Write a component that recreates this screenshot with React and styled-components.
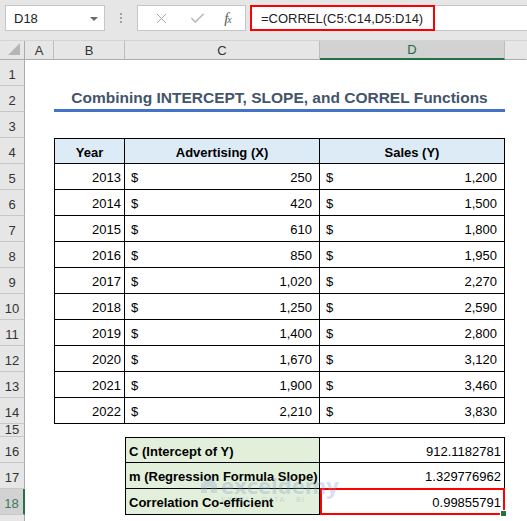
import styled, { createGlobalStyle } from "styled-components";
import { X, Check } from "lucide-react";

const COLS = "25px 29px 71px 195px 185px 1fr";

const years = [2013, 2014, 2015, 2016, 2017, 2018, 2019, 2020, 2021, 2022];
const advertising = [250, 420, 610, 850, 1020, 1250, 1400, 1670, 1900, 2210];
const sales = [1200, 1500, 1800, 1950, 2270, 2590, 2800, 3120, 3460, 3830];

const stats = [
  { label: "C (Intercept of Y)", value: "912.1182781" },
  { label: "m (Regression Formula Slope)", value: "1.329776962" },
  { label: "Correlation Co-efficient", value: "0.99855791" },
];

const fmt = (n) => n.toLocaleString("en-US");

const App = () => {
  return (
    <Window>
      <GlobalStyle />

      <FormulaBar>
        <NameBox>
          D18
          <Caret />
        </NameBox>
        <Grip>
          <span />
          <span />
          <span />
        </Grip>
        <IconBox>
          <X size={17} strokeWidth={1.4} color="#a6a6a6" />
          <Check size={17} strokeWidth={2.4} color="#bdbdbd" />
          <Fx>
            f<sub>x</sub>
          </Fx>
        </IconBox>
        <FormulaInput>
          <FormulaText>=CORREL(C5:C14,D5:D14)</FormulaText>
        </FormulaInput>
      </FormulaBar>

      <Row $h={19}>
        <Corner>
          <svg width="14" height="14" viewBox="0 0 14 14">
            <polygon points="13,1 13,13 1,13" fill="#b5b5b5" />
          </svg>
        </Corner>
        <ColHead>A</ColHead>
        <ColHead>B</ColHead>
        <ColHead>C</ColHead>
        <ColHead $selected>D</ColHead>
        <ColHead $last />
      </Row>

      <Row $h={26}>
        <RowHead>1</RowHead>
      </Row>

      <Row $h={26}>
        <RowHead>2</RowHead>
        <Cell />
        <Title>Combining INTERCEPT, SLOPE, and CORREL Functions</Title>
      </Row>

      <Row $h={26}>
        <RowHead>3</RowHead>
      </Row>

      <Row $h={26}>
        <RowHead>4</RowHead>
        <Cell />
        <Cell $box $top $left $bold $bg="#ddebf7" $align="center">
          Year
        </Cell>
        <Cell $box $top $bold $bg="#ddebf7" $align="center">
          Advertising (X)
        </Cell>
        <Cell $box $top $bold $bg="#ddebf7" $align="center">
          Sales (Y)
        </Cell>
      </Row>

      {years.map((y, i) => (
        <Row $h={26} key={y}>
          <RowHead>{i + 5}</RowHead>
          <Cell />
          <Cell $box $left $align="right">
            {y}
          </Cell>
          <Cell $box $pl={6} $pr={7}>
            <span>$</span>
            <span>{fmt(advertising[i])}</span>
          </Cell>
          <Cell $box $pl={6} $pr={7}>
            <span>$</span>
            <span>{fmt(sales[i])}</span>
          </Cell>
        </Row>
      ))}

      <Row $h={13}>
        <RowHead $short>15</RowHead>
      </Row>

      {stats.map((s, i) => (
        <Row $h={26} key={s.label}>
          <RowHead $selected={i === 2}>{i + 16}</RowHead>
          <Cell />
          <Cell />
          <Cell $box $left $top={i === 0} $bold $bg="#e2efda" $align="left">
            {s.label}
          </Cell>
          <Cell $box $top={i === 0} $align="right" $active={i === 2}>
            {s.value}
          </Cell>
        </Row>
      ))}

      <Row $h={10}>
        <RowHead />
      </Row>

      <Watermark>
        <svg width="20" height="20" viewBox="0 0 20 20">
          <path d="M2 9 L10 2 L18 9 L18 18 L12 18 L12 12 L8 12 L8 18 L2 18 Z" fill="#8ea6cf" />
        </svg>
        <div>
          <WmName>exceldemy</WmName>
          <WmTag>EXCEL · DATA · BI</WmTag>
        </div>
      </Watermark>
    </Window>
  );
};

export default App;

/* ================= STYLES ================= */

const GlobalStyle = createGlobalStyle`
  body {
    margin: 0;
    background: #fff;
    font-family: "Liberation Sans", Arial, sans-serif;
  }
`;

const Window = styled.div`
  position: relative;
  width: 527px;
  height: 521px;
  overflow: hidden;
  background: #fff;
  font-size: 13px;
  color: #000;
`;

const FormulaBar = styled.div`
  box-sizing: border-box;
  display: flex;
  align-items: flex-start;
  height: 41px;
  padding: 5px 0 0 5px;
  background: #e6e6e6;
  border-bottom: 1px solid #d4d4d4;
`;

const NameBox = styled.div`
  position: relative;
  box-sizing: border-box;
  display: flex;
  align-items: center;
  width: 100px;
  height: 26px;
  padding-left: 8px;
  background: #fff;
  border: 1px solid #c6c6c6;
  font-size: 13px;
  color: #222;
`;

const Caret = styled.span`
  position: absolute;
  right: 6px;
  top: 11px;
  border-left: 4px solid transparent;
  border-right: 4px solid transparent;
  border-top: 4px solid #6b6b6b;
`;

const Grip = styled.div`
  display: flex;
  flex-direction: column;
  align-items: center;
  gap: 2px;
  width: 32px;
  padding-top: 8px;

  span {
    width: 2px;
    height: 2px;
    background: #a0a0a0;
  }
`;

const IconBox = styled.div`
  box-sizing: border-box;
  display: flex;
  align-items: center;
  justify-content: space-around;
  width: 109px;
  height: 26px;
  margin-right: 4px;
  padding: 0 4px 0 6px;
  background: #fff;
  border: 1px solid #c6c6c6;
`;

const Fx = styled.span`
  font-family: "Liberation Serif", "Times New Roman", serif;
  font-style: italic;
  font-size: 15px;
  color: #595959;
  line-height: 1;

  sub {
    font-size: 10px;
    vertical-align: 0;
    margin-left: -1px;
  }
`;

const FormulaInput = styled.div`
  flex: 1;
  box-sizing: border-box;
  height: 26px;
  background: #fff;
  border: 1px solid #c6c6c6;
  border-right: none;
`;

const FormulaText = styled.div`
  box-sizing: border-box;
  display: flex;
  align-items: center;
  width: 185px;
  height: 26px;
  margin: -1px 0 0 -1px;
  padding-left: 9px;
  border: 2px solid #ff0000;
  font-size: 13px;
  color: #222;
`;

const Row = styled.div`
  display: grid;
  grid-template-columns: ${COLS};
  height: ${(p) => p.$h}px;
`;

const Corner = styled.div`
  display: flex;
  align-items: flex-end;
  justify-content: flex-end;
  padding: 0 3px 3px 0;
  background: #e6e6e6;
  border-right: 1px solid #ababab;
  border-bottom: 1px solid #ababab;
`;

const ColHead = styled.div`
  box-sizing: border-box;
  display: flex;
  align-items: center;
  justify-content: center;
  background: ${(p) => (p.$selected ? "#d2d2d2" : "#e6e6e6")};
  color: ${(p) => (p.$selected ? "#1d6a3f" : "#333")};
  border-right: 1px solid ${(p) => (p.$last ? "transparent" : "#bdbdbd")};
  border-bottom: ${(p) => (p.$selected ? "2px solid #217346" : "1px solid #ababab")};
  font-size: 13px;
`;

const RowHead = styled.div`
  box-sizing: border-box;
  display: flex;
  align-items: flex-end;
  justify-content: center;
  overflow: hidden;
  padding-bottom: ${(p) => (p.$short ? 0 : 4)}px;
  background: ${(p) => (p.$selected ? "#d2d2d2" : "#e6e6e6")};
  color: ${(p) => (p.$selected ? "#3d7a58" : "#333")};
  border-right: ${(p) => (p.$selected ? "2px solid #217346" : "1px solid #ababab")};
  border-bottom: 1px solid #c8c8c8;
  font-size: 13px;
  line-height: 13px;
`;

const Cell = styled.div`
  position: relative;
  box-sizing: border-box;
  display: flex;
  align-items: center;
  justify-content: ${(p) =>
    p.$align === "right"
      ? "flex-end"
      : p.$align === "center"
      ? "center"
      : p.$align === "left"
      ? "flex-start"
      : "space-between"};
  padding: 2px ${(p) => p.$pr ?? 3}px 0 ${(p) => p.$pl ?? 3}px;
  white-space: nowrap;
  background: ${(p) => p.$bg || "#fff"};
  font-weight: ${(p) => (p.$bold ? 700 : 400)};
  border-right: ${(p) => (p.$box ? "1px solid #000" : "none")};
  border-bottom: ${(p) => (p.$box ? "1px solid #000" : "none")};
  border-top: ${(p) => (p.$top ? "1px solid #000" : "none")};
  border-left: ${(p) => (p.$left ? "1px solid #000" : "none")};

  ${(p) =>
    p.$active &&
    `
    &::after {
      content: "";
      position: absolute;
      top: -1px;
      left: 0;
      right: -1px;
      bottom: -1px;
      border: 2px solid #ff0000;
    }
    &::before {
      content: "";
      position: absolute;
      right: -3px;
      bottom: -3px;
      width: 5px;
      height: 5px;
      background: #217346;
      border: 1px solid #fff;
      z-index: 2;
    }
  `}
`;

const Title = styled.div`
  grid-column: 3 / 6;
  display: flex;
  align-items: center;
  justify-content: center;
  border-bottom: 3px solid #4472c4;
  font-size: 15.5px;
  font-weight: 700;
  color: #44546a;
`;

const Watermark = styled.div`
  position: absolute;
  left: 199px;
  top: 475px;
  display: flex;
  align-items: flex-start;
  gap: 2px;
  opacity: 0.3;
  pointer-events: none;
`;

const WmName = styled.div`
  font-family: "Open Sans", sans-serif;
  font-size: 22px;
  font-weight: 700;
  line-height: 20px;
  color: #7f9bcc;
`;

const WmTag = styled.div`
  font-size: 7px;
  letter-spacing: 1.5px;
  color: #7f9bcc;
  margin-top: 1px;
`;
